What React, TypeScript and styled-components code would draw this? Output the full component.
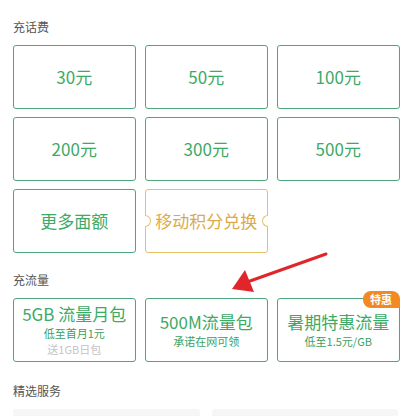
import styled, { createGlobalStyle } from "styled-components";

const GlobalStyle = createGlobalStyle`
  html, body {
    margin: 0;
    padding: 0;
    background: #ffffff;
  }
  body {
    font-family: "Noto Sans CJK SC", "Noto Sans", sans-serif;
  }
`;

type CardTone = "green" | "gold";

const Page = styled.div`
  position: relative;
  width: 405px;
  height: 416px;
  overflow: hidden;
  padding: 19px 6px 0 13px;
  box-sizing: border-box;
`;

const SectionTitle = styled.div<{ $gap?: number }>`
  font-size: 12px;
  line-height: 16px;
  color: #555;
  margin-top: ${(p) => p.$gap ?? 0}px;
  margin-bottom: 10px;
`;

const Grid = styled.div`
  display: grid;
  grid-template-columns: repeat(3, 122.5px);
  grid-auto-rows: 64px;
  column-gap: 9.5px;
  row-gap: 8px;
`;

const Card = styled.div<{ $tone?: CardTone }>`
  position: relative;
  box-sizing: border-box;
  border: 1px solid ${(p) => (p.$tone === "gold" ? "#e6c262" : "#4fa57c")};
  border-radius: 3px;
  display: flex;
  flex-direction: column;
  align-items: center;
  justify-content: center;
  color: ${(p) => (p.$tone === "gold" ? "#dcaa4c" : "#3daa66")};
  font-size: 17px;
  line-height: 24px;
`;

/* half-round cut on the ticket's side */
const Notch = styled.span<{ $side: "left" | "right" }>`
  position: absolute;
  top: 50%;
  ${(p) => p.$side}: -1px;
  width: 5px;
  height: 10px;
  margin-top: -6px;
  background: #fff;
  border: 1px solid #e6c262;
  ${(p) => p.$side}: -1px;
  border-${(p) => p.$side}: none;
  border-radius: ${(p) => (p.$side === "left" ? "0 6px 6px 0" : "6px 0 0 6px")};
`;

const Main = styled.div`
  font-size: 17px;
  line-height: 22px;
`;

const Sub = styled.div<{ $muted?: boolean }>`
  font-size: 11px;
  line-height: 16px;
  color: ${(p) => (p.$muted ? "#c4c4c4" : "#3a9f62")};
`;

const Badge = styled.span`
  position: absolute;
  top: -8px;
  right: -1px;
  width: 37px;
  height: 17px;
  border-radius: 8px 8px 0 8px;
  background: #f18a22;
  color: #fff;
  font-size: 11px;
  font-weight: 700;
  line-height: 17px;
  text-align: center;
`;

const ServiceRow = styled.div`
  display: grid;
  grid-template-columns: 187px 186px;
  column-gap: 12px;
`;

const ServiceBox = styled.div`
  height: 40px;
  background: #f6f6f6;
  border-radius: 3px;
`;

const Arrow = styled.svg`
  position: absolute;
  left: 0;
  top: 0;
  pointer-events: none;
`;

const amounts = ["30元", "50元", "100元", "200元", "300元", "500元"];

export default function App() {
  return (
    <>
      <GlobalStyle />
      <Page>
        <SectionTitle>充话费</SectionTitle>
        <Grid>
          {amounts.map((a) => (
            <Card key={a}>{a}</Card>
          ))}
          <Card>更多面额</Card>
          <Card $tone="gold">
            <Notch $side="left" />
            移动积分兑换
            <Notch $side="right" />
          </Card>
        </Grid>

        <SectionTitle $gap={19}>充流量</SectionTitle>
        <Grid>
          <Card>
            <Main>5GB 流量月包</Main>
            <Sub>低至首月1元</Sub>
            <Sub $muted>送1GB日包</Sub>
          </Card>
          <Card>
            <Main>500M流量包</Main>
            <Sub>承诺在网可领</Sub>
          </Card>
          <Card>
            <Badge>特惠</Badge>
            <Main>暑期特惠流量</Main>
            <Sub>低至1.5元/GB</Sub>
          </Card>
        </Grid>

        <SectionTitle $gap={21}>精选服务</SectionTitle>
        <ServiceRow>
          <ServiceBox />
          <ServiceBox />
        </ServiceRow>

        <Arrow width="405" height="416" viewBox="0 0 405 416">
          <line x1="326" y1="254" x2="250" y2="281" stroke="#e0262b" strokeWidth="3" strokeLinecap="round" />
          <polygon points="232,289 245,270 254,292" fill="#e0262b" />
        </Arrow>
      </Page>
    </>
  );
}
